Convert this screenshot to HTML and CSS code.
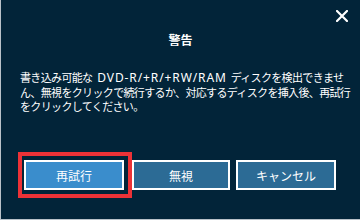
FILE: index.html
```html
<!DOCTYPE html>
<html lang="ja">
<head>
<meta charset="utf-8">
<link rel="stylesheet" href="styles.css">
</head>
<body>
<div class="dialog">
  <button class="close" aria-label="閉じる">
    <svg width="12" height="12" viewBox="0 0 12 12"><path d="M1 1L11 11M11 1L1 11" stroke="#fff" stroke-width="2.2" stroke-linecap="square"/></svg>
  </button>
  <div class="title">警告</div>
  <p class="message">書き込み可能な <span class="latin">DVD-R/+R/+RW/RAM</span> ディスクを検出できませ<br>ん、無視をクリックで続行するか、対応するディスクを挿入後、再試行<br>をクリックしてください。</p>
  <div class="actions">
    <span class="focus-ring"><button class="btn btn-primary">再試行</button></span>
    <button class="btn">無視</button>
    <button class="btn btn-last">キャンセル</button>
  </div>
</div>
</body>
</html>
```

FILE: styles.css
```css
html, body {
  margin: 0;
  padding: 0;
}
body {
  width: 360px;
  height: 220px;
  overflow: hidden;
  font-family: "Noto Sans CJK JP", "Noto Sans", sans-serif;
}
.dialog {
  position: relative;
  box-sizing: border-box;
  width: 360px;
  height: 220px;
  background: #022439;
  border-left: 1px solid #b9c2c9;
  border-bottom: 1px solid #b9c2c9;
  display: flex;
  flex-direction: column;
  color: #ffffff;
}
.close {
  position: absolute;
  top: 10px;
  right: 12px;
  width: 12px;
  height: 12px;
  padding: 0;
  border: 0;
  background: none;
  display: block;
}
.close svg {
  display: block;
}
.title {
  margin-top: 32px;
  text-align: center;
  font-size: 12px;
  line-height: 16px;
  font-weight: bold;
}
.message {
  margin: 22px 0 0 0;
  padding-left: 19px;
  font-size: 11px;
  line-height: 14px;
  letter-spacing: -0.65px;
  white-space: nowrap;
}
.latin {
  display: inline-block;
  margin: 0 2px 0 3px;
  font-family: "Noto Sans", sans-serif;
  font-size: 12px;
  line-height: 14px;
  letter-spacing: 0.9px;
}
.actions {
  margin-top: 39px;
  padding-left: 17px;
  display: flex;
  align-items: center;
}
.focus-ring {
  display: flex;
  border: 4px solid #ec3237;
  padding: 4px 4px 4px 2px;
}
.btn {
  box-sizing: border-box;
  height: 30px;
  width: 98px;
  border: 2px solid #ffffff;
  background: #2c6b95;
  color: #ffffff;
  font-family: "Noto Sans CJK JP", "Noto Sans", sans-serif;
  font-size: 12px;
  padding: 0;
  margin: 0;
}
.btn-primary {
  width: 100px;
  background: #3a8dcc;
}
.btn-last {
  width: 100px;
  margin-left: 6px;
}
```
